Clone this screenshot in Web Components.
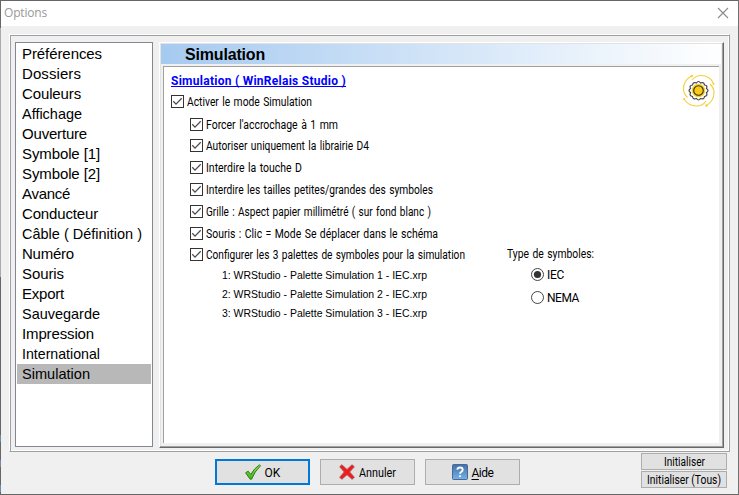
<!DOCTYPE html>
<html lang="fr"><head><meta charset="utf-8"><title>Options</title>
<style>html,body{margin:0;height:495px;overflow:hidden;background:#f0f0f0}</style></head>
<body><options-window></options-window>
<script>
const define=(name,html,setup)=>{
  const t=document.createElement('template');t.innerHTML=html;
  customElements.define(name,class extends HTMLElement{
    connectedCallback(){
      if(this.shadowRoot)return;
      this.attachShadow({mode:'open'}).append(t.content.cloneNode(true));
      if(setup)setup(this,this.shadowRoot);
    }
  });
};
/* Text run fitted to a given width: condensed when too wide, otherwise letter-spaced */
define('fit-text','<style>:host{display:inline-block;white-space:pre;transform-origin:0 0}</style><slot></slot>',(el)=>{
  const w=+el.getAttribute('w');if(!w)return;
  const n=el.textContent.length,now=el.getBoundingClientRect().width;
  if(now>w+2){el.style.transform='scaleX('+(w/now).toFixed(4)+')';el.style.marginRight=(w-now)+'px';}
  else el.style.letterSpacing=((w-now)/n).toFixed(3)+'px';
});
define('check-item',`<style>:host{display:flex;height:13px;gap:3px;font:12px/15px Roboto,sans-serif;word-spacing:1px;color:#000}
svg{flex:none;display:block}fit-text{height:13px}</style>
<svg width="13" height="13"><rect x=".5" y=".5" width="12" height="12" fill="#fff" stroke="#333"/><path d="M2.3 6.3 5 9.2 10.7 3.2" fill="none" stroke="#4a4a4a" stroke-width="1.25"/></svg><fit-text></fit-text>`,
(el,r)=>{const f=r.querySelector('fit-text'),n=document.createElement('fit-text');n.setAttribute('w',el.getAttribute('w'));n.textContent=el.getAttribute('label');f.replaceWith(n);});
define('radio-item',`<style>:host{display:flex;height:13px;gap:3px;font:12px/14px Roboto,sans-serif}svg{display:block}:host(:not([checked])) .dot{display:none}</style>
<svg width="13" height="13"><circle cx="6.5" cy="6.5" r="6" fill="#fff" stroke="#444"/><circle class="dot" cx="6.5" cy="6.5" r="3.6" fill="#333"/></svg><slot></slot>`);
define('push-button',`<style>:host{box-sizing:border-box;display:flex;align-items:center;justify-content:center;gap:4px;background:#e1e1e1;border:1px solid #adadad;font:12px/14px Roboto,sans-serif;color:#000}
:host([primary]){border:2px solid #0078d7}::slotted(fit-text){padding-top:1px}</style><slot name="icon"></slot><slot></slot>`);
define('category-item',`<style>:host{display:block;box-sizing:border-box;height:20px;padding-left:5px;font:15px/19px "Liberation Sans",Arial,sans-serif;color:#000}:host([selected]){background:#b8b8b8}</style><slot></slot>`);
define('category-list',`<style>:host{display:block;box-sizing:border-box;width:138px;height:405px;border:1px solid #828790;background:#fff;padding:1px}</style><slot></slot>`);
define('title-bar',`<style>:host{display:flex;justify-content:space-between;height:25px;box-sizing:border-box;background:#fff;padding:0 9px 0 3px;font:12px/24px "Open Sans",sans-serif;color:#999}svg{margin-top:6px}</style>
<slot></slot><svg width="12" height="12"><path d="M1 1 11 11M11 1 1 11" stroke="#8b8b8b" stroke-width="1.1"/></svg>`);
define('gear-badge',`<style>:host{display:block;width:34px;height:34px}svg{display:block}</style>
<svg width="34" height="34" viewBox="0 0 34 34"><g fill="none" stroke="#f5cf3a" stroke-width="1.1">
<path d="M9.500 2C4 5 1.500 10 1.500 15c0 4 2 6.500 4 8.500"/><path d="M31.500 9.500C29 4 24 1.500 19 1.500c-4 0-7 2-9 4.500"/><path d="M24.500 31.500C30 28 32 23 32 18.500c0-4-2-6.500-4-8.500"/><path d="M2 25c3 5 8 7 13 7 4 0 7-2 9-5"/></g>
<g fill="#f5cf3a"><circle cx="9.800" cy="2" r="1.200"/><circle cx="31.500" cy="10" r="1"/><circle cx="24.500" cy="31.500" r="1.200"/><circle cx="2" cy="25" r="1"/></g>
<path d="M14.500 9Q16.500 6 18.500 9 22 7.500 22.500 11 26 11.500 24.500 14.500 27.500 16.500 24.500 18.500 26 22 22.500 22.500 22 26 18.500 24.500 16.500 27.500 14.500 24.500 11 26 10.500 22.500 7 22 8.500 18.500 5.500 16.500 8.500 14.500 7 11.500 10.500 11 11 7.500 14.500 9Z" fill="#fff" stroke="#444" stroke-width="1.200"/>
<circle cx="16.500" cy="16.500" r="6.800" fill="#f8d02c"/><circle cx="16.500" cy="16.500" r="4.800" fill="#fbc91c" stroke="#33300f" stroke-width="1.100"/></svg>`);
define('settings-page',`<style>
:host{display:flex;flex-direction:column;box-sizing:border-box;width:565px;height:406px;border:1px solid;border-color:#fff #696969 #696969 #fff;box-shadow:inset -1px -1px #a0a0a0,inset 1px 1px #e3e3e3;padding:1px 2px 4px 1px;color:#000}
h1{margin:0;height:20px;padding-left:24px;background:linear-gradient(90deg,#a6caf0,#fff);font:bold 16px/21px "Liberation Sans",Arial,sans-serif}
.page{box-sizing:border-box;flex:1;margin:2px 2px 0;border:solid #a0a0a0;border-width:1px 0 0 1px;background:#fff;padding:7px 3px 0 7px;display:flex;justify-content:space-between}
h2{margin:0 0 6px;height:15px;font:bold 12px/15px Roboto,sans-serif;color:#00f;white-space:pre}h2 fit-text{border-bottom:1px solid #00f;height:12px;line-height:14px}
.subs{display:grid;grid-template-rows:21px 22px 22px 22px 22px 21px 13px;padding:10px 0 0 19px}
.lower{display:flex}
.files{width:286px;padding:8px 0 0 51px;box-sizing:border-box;font:11px/19px "Liberation Sans",Arial,sans-serif;margin-top:-3px}
.files fit-text{display:block;width:max-content}
.type{padding-left:50px;margin-top:-14px;font:12px/15px Roboto,sans-serif;word-spacing:1px}
.radios{display:grid;gap:10px;padding:6px 0 0 24px}</style>
<h1><fit-text w="80">Simulation</fit-text></h1>
<div class="page"><div><h2><fit-text w="175">Simulation ( WinRelais Studio )</fit-text></h2>
<check-item label="Activer le mode Simulation" w="125"></check-item>
<div class="subs">
<check-item label="Forcer l'accrochage à 1 mm" w="132"></check-item>
<check-item label="Autoriser uniquement la librairie D4" w="163"></check-item>
<check-item label="Interdire la touche D" w="96"></check-item>
<check-item label="Interdire les tailles petites/grandes des symboles" w="227"></check-item>
<check-item label="Grille : Aspect papier millimétré ( sur fond blanc )" w="225"></check-item>
<check-item label="Souris : Clic = Mode Se déplacer dans le schéma" w="232"></check-item>
<check-item label="Configurer les 3 palettes de symboles pour la simulation" w="259"></check-item></div>
<div class="lower"><div class="files"><fit-text w="205">1: WRStudio - Palette Simulation 1 - IEC.xrp</fit-text><fit-text w="205">2: WRStudio - Palette Simulation 2 - IEC.xrp</fit-text><fit-text w="205">3: WRStudio - Palette Simulation 3 - IEC.xrp</fit-text></div>
<div class="type"><fit-text w="87">Type de symboles:</fit-text><div class="radios"><radio-item checked><fit-text w="17">IEC</fit-text></radio-item><radio-item><fit-text w="32">NEMA</fit-text></radio-item></div></div></div>
</div><gear-badge></gear-badge></div>`);
define('options-window',`<style>
:host{display:flex;flex-direction:column;box-sizing:border-box;width:739px;height:495px;padding:1px;background:linear-gradient(90deg,transparent 1px,#666 1px 738px,#707070 738px),linear-gradient(#666 28px,#aaa 28px 277px,#666 277px 435px,#7089aa 435px 442px,#666 442px 460px,#7089aa 460px 467px,#666 467px 485px,#7089aa 485px 492px,#666 492px)}
.body{flex:1;background:#f0f0f0;padding:8px 0 0 8px}
.group{display:flex;gap:6px;box-sizing:border-box;width:721px;height:418px;border:1px solid;border-color:#fff #a0a0a0 #a0a0a0 #fff;box-shadow:inset 1px 1px #a0a0a0,inset -1px -1px #fff;padding:7px 5px}
.foot{display:flex;padding-left:206px;height:41px}.actions{display:flex;gap:10px;padding-top:7px}
.actions push-button{width:95px;height:26px}.reset{display:grid;gap:1px;align-content:start;margin-left:121px;padding-top:1px}.reset push-button{width:86px;height:17px}
svg{display:block}u{text-underline-offset:2px}</style>
<title-bar><fit-text w="43">Options</fit-text></title-bar>
<div class="body"><div class="group"><category-list></category-list><settings-page></settings-page></div>
<div class="foot"><div class="actions">
<push-button primary><svg slot="icon" width="16" height="16"><defs><linearGradient id="g" x2="0" y2="1"><stop stop-color="#9de052"/><stop offset="1" stop-color="#35b512"/></linearGradient></defs><path d="M.6 8.800 3.200 7.200 5.800 10.500Q9 4.500 14.500.8L15.500 1.800Q9.500 7.500 6.600 15.200L5.200 15.200Z" fill="url(#g)" stroke="#2c7a1d"/></svg><fit-text w="16">OK</fit-text></push-button>
<push-button><svg slot="icon" width="16" height="16"><path d="M.7 2.800 2.800.8 8 5.500 13 .8 15.300 2.800 10.600 8 15.300 13.200 13.200 15.300 8 10.700 2.800 15.300.7 13.200 5.300 8Z" fill="#f21a1a" stroke="#a55" stroke-width="1"/></svg><fit-text w="37">Annuler</fit-text></push-button>
<push-button><svg slot="icon" width="16" height="16"><defs><linearGradient id="b" x2="0" y2="1"><stop stop-color="#426fa8"/><stop offset="1" stop-color="#78b3e3"/></linearGradient></defs><rect x=".5" y=".5" width="15" height="15" rx="1" fill="url(#b)" stroke="#46699b"/><path d="M5.300 5.600Q5.600 3.500 8 3.500 10.700 3.500 10.700 5.700 10.700 7 9.200 7.900 8 8.600 8 9.700M8 11.200V13" fill="none" stroke="#fff" stroke-width="1.800"/></svg><fit-text w="22"><u>A</u>ide</fit-text></push-button>
</div><div class="reset"><push-button><fit-text w="41">Initialiser</fit-text></push-button><push-button><fit-text w="74">Initialiser (Tous)</fit-text></push-button></div></div></div>`,
(el,r)=>{
  const list=r.querySelector('category-list');
  const items=[['Préférences',80],['Dossiers',59],['Couleurs',59],['Affichage',60],['Ouverture',65],['Symbole [1]',78],['Symbole [2]',78],['Avancé',48],['Conducteur',76],['Câble ( Définition )',120],['Numéro',52],['Souris',42],['Export',42],['Sauvegarde',78],['Impression',72],['International',78],['Simulation',68]];
  for(const [label,w] of items){
    const it=document.createElement('category-item'),t=document.createElement('fit-text');
    if(label==='Simulation')it.setAttribute('selected','');
    t.setAttribute('w',w);t.textContent=label;it.append(t);list.append(it);
  }
});
</script></body></html>
